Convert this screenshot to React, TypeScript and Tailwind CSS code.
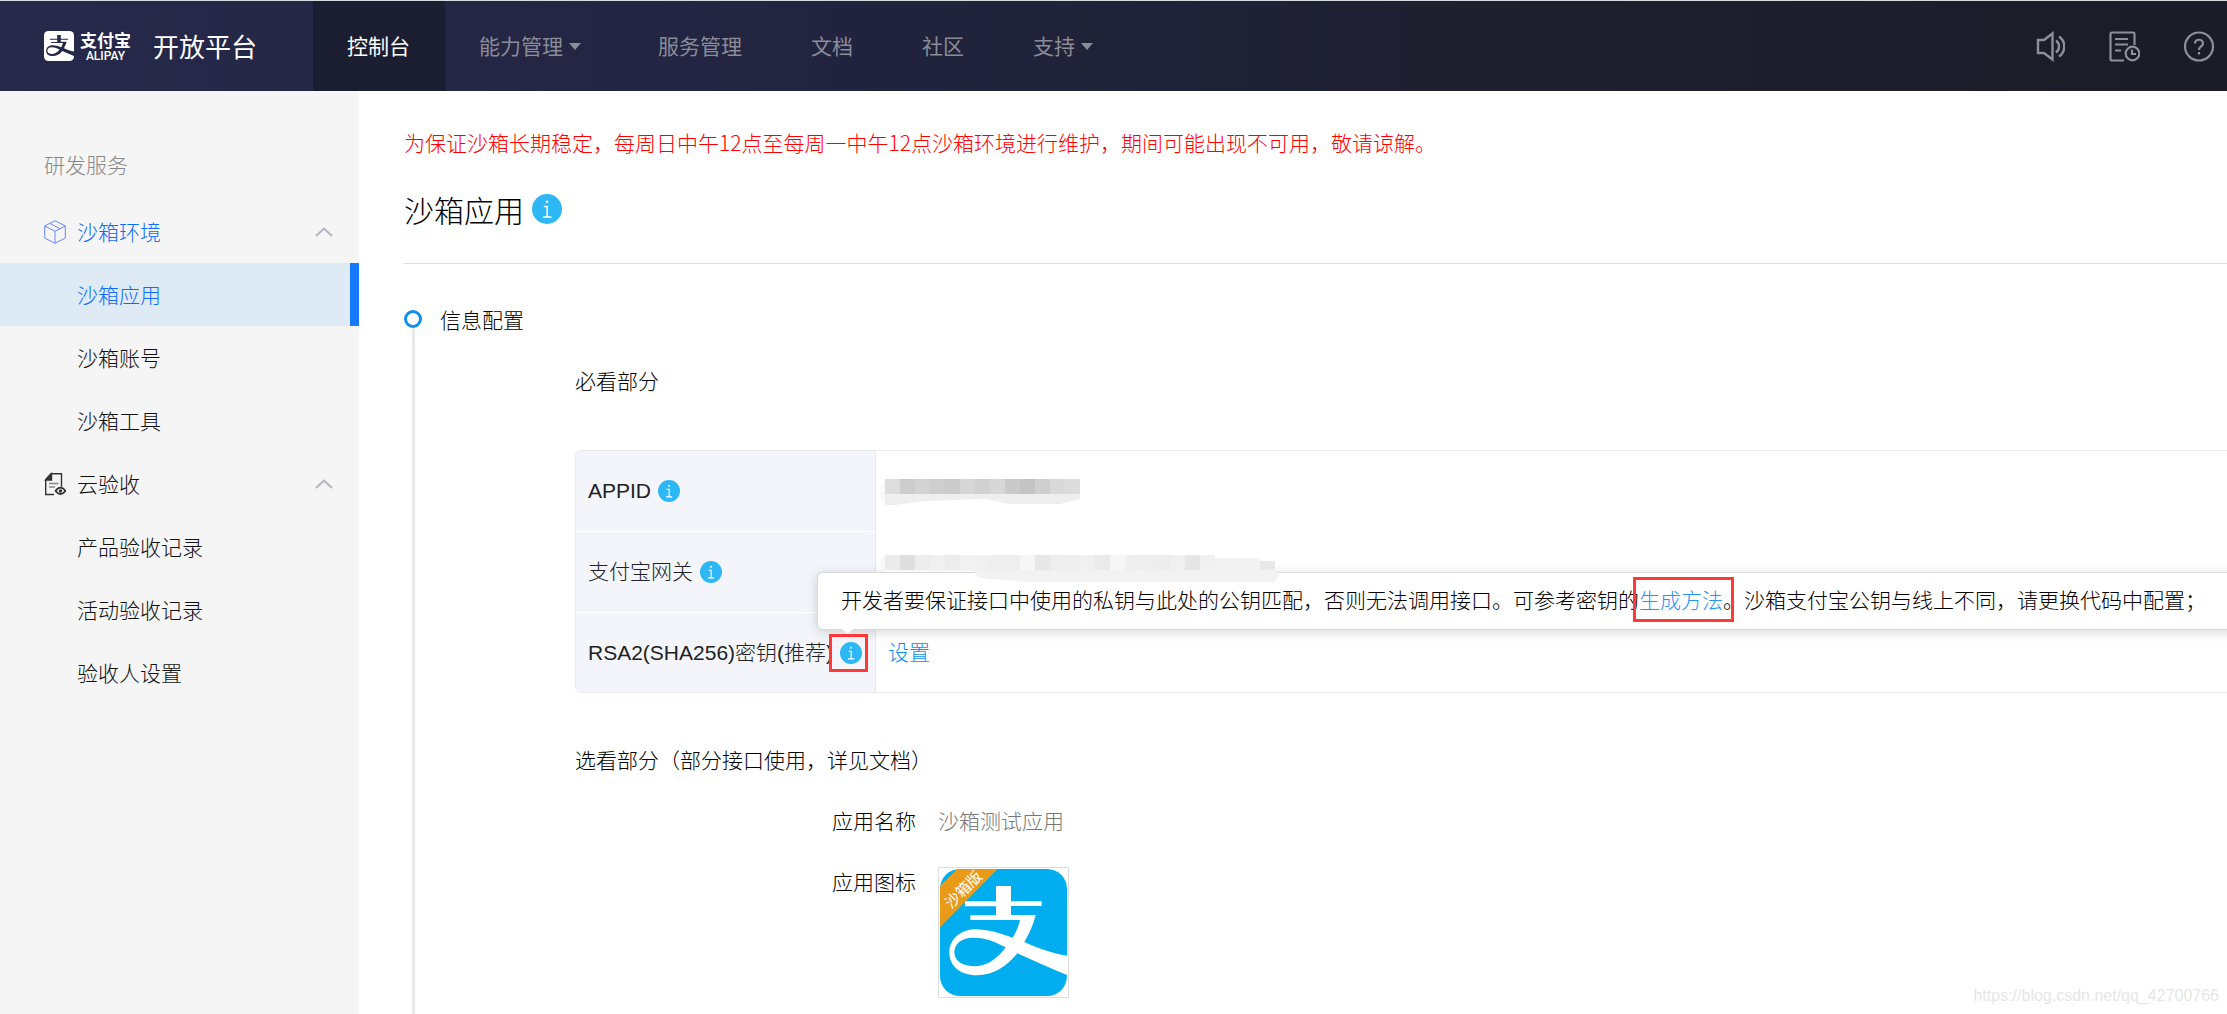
import type { ReactNode } from "react";
import clsx from "clsx";

const NAV = [
  { label: "控制台", active: true },
  { label: "能力管理", menu: true },
  { label: "服务管理" },
  { label: "文档" },
  { label: "社区" },
  { label: "支持", menu: true },
];

const SANDBOX_LINKS = ["沙箱应用", "沙箱账号", "沙箱工具"];
const REVIEW_LINKS = ["产品验收记录", "活动验收记录", "验收人设置"];

const APPID_MASK = [
  "#dddddd", "#cccccc", "#d3d3d3", "#cecece", "#cbcbcb", "#d6d6d6", "#d1d1d1",
  "#d7d7d7", "#cacaca", "#c3c3c3", "#cfcfcf", "#d9d9d9", "#dcdcdc",
];

const GATEWAY_MASK = [
  "#ebebeb", "#dedede", "#ededed", "#f0f0f0", "#ececec", "#f2f2f2", "#f0f0f0",
  "#eeeeee", "#eeeeee", "#f6f6f6", "#e7e7e7", "#eeeeee", "#efefef", "#f0f0f0",
  "#eaeaea", "#f6f6f6", "#efefef", "#eeeeee", "#ededed", "#f0f0f0", "#e6e6e6",
  "#f0f0f0", "#f3f3f3", "#f2f2f2", "#f3f3f3", "#e9e9e9",
];

const ALIPAY_MARK =
  "M168 51h45v46h92v14h-92v27h74c-7 30-19 55-34 81 40 19 85 34 128 41v58c-51-20-101-43-149-65-32 40-72 66-122 66-50 0-82-28-82-69s37-69 77-69 75 12 113 25c10-16 18-35 22-53H91v-14h77v-27H75V97h93zM197 235c-27-14-57-29-97-29s-57 22-57 44c0 28 27 42 62 42 40 0 72-29 92-57z";

function InfoIcon({ className }: { className: string }) {
  return (
    <svg viewBox="0 0 30 30" className={clsx("flex-none", className)} aria-hidden="true">
      <circle cx="15" cy="15" r="15" fill="#2db7f5" />
      <circle cx="15" cy="7.8" r="1.3" fill="#fff" />
      <path d="M11.8 12.6h3.4v10.2M11 23h8.4" fill="none" stroke="#fff" strokeWidth="1.5" />
    </svg>
  );
}

function Chevron() {
  return (
    <svg viewBox="0 0 18 10" className="ml-auto h-[10px] w-[18px]" aria-hidden="true">
      <path d="M1 9l8-7.5L17 9" fill="none" stroke="#b4b5c2" strokeWidth="2" />
    </svg>
  );
}

function Header() {
  return (
    <header className="flex h-[91px] items-stretch border-t border-[#d5dbde] bg-[linear-gradient(90deg,#27294b_0%,#222440_35%,#1e2030_65%,#1a1c27_100%)] text-[21px] font-normal">
      <a href="#" className="flex w-[313px] flex-none items-center pl-11 text-white">
        <svg viewBox="0 0 381 381" className="h-[30px] w-[30px]" aria-hidden="true">
          <rect width="381" height="381" rx="56" fill="#fff" />
          <path d={ALIPAY_MARK} fill="#26284a" fillRule="evenodd" />
        </svg>
        <span className="ml-[6px] flex flex-col items-center">
          <span className="text-[17px] leading-5 font-bold">支付宝</span>
          <span className="font-['Roboto',sans-serif] text-xs leading-3 font-medium">ALIPAY</span>
        </span>
        <span className="ml-[22px] text-[26px] leading-8">开放平台</span>
      </a>
      <nav className="flex">
        {NAV.map((item) => (
          <a
            key={item.label}
            href="#"
            className={clsx(
              "flex items-center pr-[35px] pl-[34px]",
              item.active ? "bg-[#1b1e30] text-white" : "text-[#8b8c98]",
            )}
          >
            {item.label}
            {item.menu && (
              <svg viewBox="0 0 12 7" className="mr-2 ml-[6px] h-[7px] w-3" aria-hidden="true">
                <path d="M0 0h12L6 7z" fill="currentColor" />
              </svg>
            )}
          </a>
        ))}
      </nav>
      <div className="mr-3 ml-auto flex items-center gap-11 text-[#8e8f97]">
        <button type="button" aria-label="公告">
          <svg viewBox="-3 0 31 31" className="h-[31px] w-[31px]" fill="none" stroke="currentColor" strokeWidth="2.4">
            <path d="M1 9h6l8.500-6.500v26L7 22H1zM19 9.500c4 3 4 9 0 12M22 5.500c7 4.500 7 15.500 0 20" />
          </svg>
        </button>
        <button type="button" aria-label="日志">
          <svg viewBox="0 0 31 31" className="h-[31px] w-[31px]" fill="none" stroke="currentColor" strokeWidth="2.2">
            <path d="M15 29.500H3q-1.500 0-1.500-1.500V3q0-1.500 1.500-1.500h21q1.500 0 1.500 1.500v11M6 8h13M6 13.500h13M6 19.500h6" />
            <circle cx="23.500" cy="22.500" r="6.800" />
            <path d="M23 18.500v4.500h4" />
          </svg>
        </button>
        <button type="button" aria-label="帮助">
          <svg viewBox="0 0 31 31" className="h-[31px] w-[31px]" fill="none" stroke="currentColor" strokeWidth="2.2">
            <circle cx="15" cy="15.500" r="14" />
            <path d="M11 12.500c0-5 8-5 8 0 0 3-4 3-4 6.500M15 21v2.500" />
          </svg>
        </button>
      </div>
    </header>
  );
}

function SideLinks({ links, current }: { links: string[]; current?: string }) {
  return (
    <ul>
      {links.map((link) => (
        <li key={link}>
          <a
            href="#"
            className={clsx(
              "flex h-[63px] items-center pl-[77px]",
              link === current && "border-r-[9px] border-[#1677ff] bg-[#deebf5] text-[#0f6bff]",
            )}
          >
            {link}
          </a>
        </li>
      ))}
    </ul>
  );
}

function Sidebar() {
  return (
    <aside className="w-[359px] flex-none bg-[#f5f5f5] pt-[43px] text-[21px] text-[#111]">
      <div className="flex h-[66px] items-center pb-1 pl-11 text-[#888]">研发服务</div>
      <button type="button" className="flex h-[63px] w-full items-center pr-[26px] pl-11 text-[#0f6bff]">
        <svg viewBox="0 0 22 24" className="mr-[11px] h-6 w-[22px]" fill="none" stroke="#6f86ff" aria-hidden="true">
          <path d="M11 .7l10.300 5.300v12L11 23.300.7 18V6zM.7 6L11 11.300 21.300 6M11 11.300v12M6 3.500l10 5.200" />
        </svg>
        沙箱环境
        <Chevron />
      </button>
      <SideLinks links={SANDBOX_LINKS} current="沙箱应用" />
      <button type="button" className="flex h-[63px] w-full items-center pr-[26px] pl-11">
        <svg viewBox="0 0 22 24" className="mr-[11px] h-6 w-[22px]" fill="none" stroke="#333" strokeWidth="1.400" aria-hidden="true">
          <path d="M10 22.500H1.700V7.500L7 1.700h10.500v13" />
          <path d="M1.700 8L7.500 1.700V8z" fill="#333" />
          <path d="M5 11.500h9.500M5 15h6" stroke="#888" />
          <path d="M11.500 19c3-4.500 7-4.500 10 0-3 4-7 4-10 0z" strokeWidth="1.800" />
          <circle cx="16.500" cy="19" r="1" fill="#333" />
        </svg>
        云验收
        <Chevron />
      </button>
      <SideLinks links={REVIEW_LINKS} />
    </aside>
  );
}

function AppidMask() {
  return (
    <svg viewBox="0 0 200 28" className="h-7 w-[200px]" aria-hidden="true">
      <path d="M6 0C-2 6-2 22 7 26z" fill="#f7f8fa" />
      <path d="M5 15h195v5l-20 5h-50l-25-5-60 2-30 4H5z" fill="#efefef" />
      {APPID_MASK.map((fill, i) => (
        <rect key={i} x={5 + i * 15} y="0" width="15" height="15" fill={fill} />
      ))}
    </svg>
  );
}

function GatewayMask() {
  return (
    <svg viewBox="0 0 402 28" className="relative z-20 h-7 w-[402px]" aria-hidden="true">
      <path d="M6 0C-2 3-2 13 6 17h90V6z" fill="#f8f8f9" />
      <path d="M92 15h303q7 4 0 11v1H150l-40-3-12-2z" fill="#f2f2f2" />
      {GATEWAY_MASK.map((fill, i) => (
        <rect
          key={i}
          x={5 + i * 15}
          y={i > 24 ? 6 : i > 21 ? 3 : 0}
          width="15"
          height={i > 24 ? 9 : i > 21 ? 12 : 15}
          fill={fill}
        />
      ))}
    </svg>
  );
}

function ConfigRow({ label, children, cell }: { label: string; children: ReactNode; cell: string }) {
  return (
    <tr className="group h-[81px] last:h-[79px]">
      <th
        scope="row"
        className="w-[300px] border-r border-b border-r-[#e9e9e9] border-b-white bg-[#f4f5fa] pl-3 text-left font-light text-[#222] group-first:rounded-tl group-last:border-b-0"
      >
        <span className="flex items-center gap-[7px] whitespace-nowrap">
          {label}
          <InfoIcon className="h-[22px] w-[22px]" />
        </span>
      </th>
      <td className={cell}>{children}</td>
    </tr>
  );
}

function KeyTooltip() {
  return (
    <div
      role="tooltip"
      className="absolute top-[122px] -right-4 left-[242px] z-10 flex h-[58px] items-center rounded-md border border-[#d9d9d9] bg-white pl-[23px] whitespace-nowrap shadow-[0_2px_12px_rgba(0,0,0,0.16)]"
    >
      <p>
        开发者要保证接口中使用的私钥与此处的公钥匹配，否则无法调用接口。可参考密钥的
        <span className="relative">
          <a href="#" className="text-[#2593f0]">
            生成方法
          </a>
          <span className="pointer-events-none absolute -top-3 -right-[11px] -bottom-[10px] -left-[6px] border-3 border-[#fc3a38]" />
        </span>
        。沙箱支付宝公钥与线上不同，请更换代码中配置；
      </p>
      <span className="absolute -bottom-[5px] left-[25px] h-[9px] w-[9px] rotate-45 border-r border-b border-[#d9d9d9] bg-white" />
    </div>
  );
}

function ConfigTable() {
  return (
    <div className="relative mt-[54px] font-['Liberation_Sans','Noto_Sans_CJK_SC',sans-serif]">
      <div className="rounded-l-md border-y border-l border-[#e9e9e9]">
        <table className="w-full border-separate border-spacing-0">
          <tbody>
            <ConfigRow label="APPID" cell="pt-7 pl-1 align-top">
              <AppidMask />
            </ConfigRow>
            <ConfigRow label="支付宝网关" cell="pt-[23px] pl-1 align-top">
              <GatewayMask />
            </ConfigRow>
            <ConfigRow label="RSA2(SHA256)密钥(推荐)" cell="pl-3">
              <a href="#" className="text-[#108ee9]">
                设置
              </a>
            </ConfigRow>
          </tbody>
        </table>
      </div>
      <KeyTooltip />
      <span className="pointer-events-none absolute top-[184px] left-[254px] z-20 h-[38px] w-[39px] border-3 border-[#fc3a38]" />
    </div>
  );
}

function AppLogo() {
  return (
    <svg viewBox="0 0 381 381" className="h-[127px] w-[127px] overflow-visible" role="img" aria-label="沙箱测试应用">
      <clipPath id="app-logo">
        <rect width="381" height="381" rx="60" />
      </clipPath>
      <g clipPath="url(#app-logo)">
        <rect width="381" height="381" fill="#00aeef" />
        <path d={ALIPAY_MARK} fill="#fff" fillRule="evenodd" />
        <path d="M52 0h121L0 175V50z" fill="#e99a17" />
      </g>
      <text
        x="68"
        y="59"
        fill="#fff"
        fontSize="45"
        fontWeight="400"
        textAnchor="middle"
        dominantBaseline="central"
        transform="rotate(-45 68 59)"
      >
        沙箱版
      </text>
    </svg>
  );
}

export default function App() {
  return (
    <div className="relative flex min-h-screen flex-col overflow-hidden bg-white font-['Noto_Sans_CJK_SC',sans-serif] font-light text-black">
      <Header />
      <div className="flex flex-1">
        <Sidebar />
        <main className="flex min-w-0 flex-1 flex-col pl-[45px] text-[21px] leading-8">
          <p className="mt-[35px] text-[#f00]">
            为保证沙箱长期稳定，每周日中午12点至每周一中午12点沙箱环境进行维护，期间可能出现不可用，敬请谅解。
          </p>
          <div className="mt-[29px] flex items-center gap-2 border-b border-[#ddd] pb-8">
            <h1 className="text-[30px] leading-[44px]">沙箱应用</h1>
            <InfoIcon className="h-[30px] w-[30px]" />
          </div>
          <div className="mt-[39px] flex flex-1">
            <div className="flex w-[18px] flex-none flex-col items-center pt-[7px]">
              <span className="h-[18px] w-[18px] rounded-full border-3 border-[#108ee9]" />
              <span className="w-[3px] flex-1 bg-[#e9e9e9]" />
            </div>
            <section className="min-w-0 flex-1 pl-[18px]">
              <h2>信息配置</h2>
              <div className="mt-[29px] pl-[135px]">
                <h3>必看部分</h3>
                <ConfigTable />
                <h3 className="mt-[50px]">选看部分（部分接口使用，详见文档）</h3>
                <dl className="mt-[29px] grid grid-cols-[341px_1fr] gap-x-[22px] gap-y-[29px]">
                  <dt className="text-right">应用名称</dt>
                  <dd className="text-[#777]">沙箱测试应用</dd>
                  <dt className="text-right">应用图标</dt>
                  <dd className="mt-0.5 h-[131px] w-[131px] border border-[#ddd] p-px">
                    <AppLogo />
                  </dd>
                </dl>
              </div>
            </section>
          </div>
        </main>
      </div>
      <span className="absolute right-2 bottom-2 font-['Liberation_Sans',sans-serif] text-base leading-5 text-[#e6e6e6]">
        https://blog.csdn.net/qq_42700766
      </span>
    </div>
  );
}
